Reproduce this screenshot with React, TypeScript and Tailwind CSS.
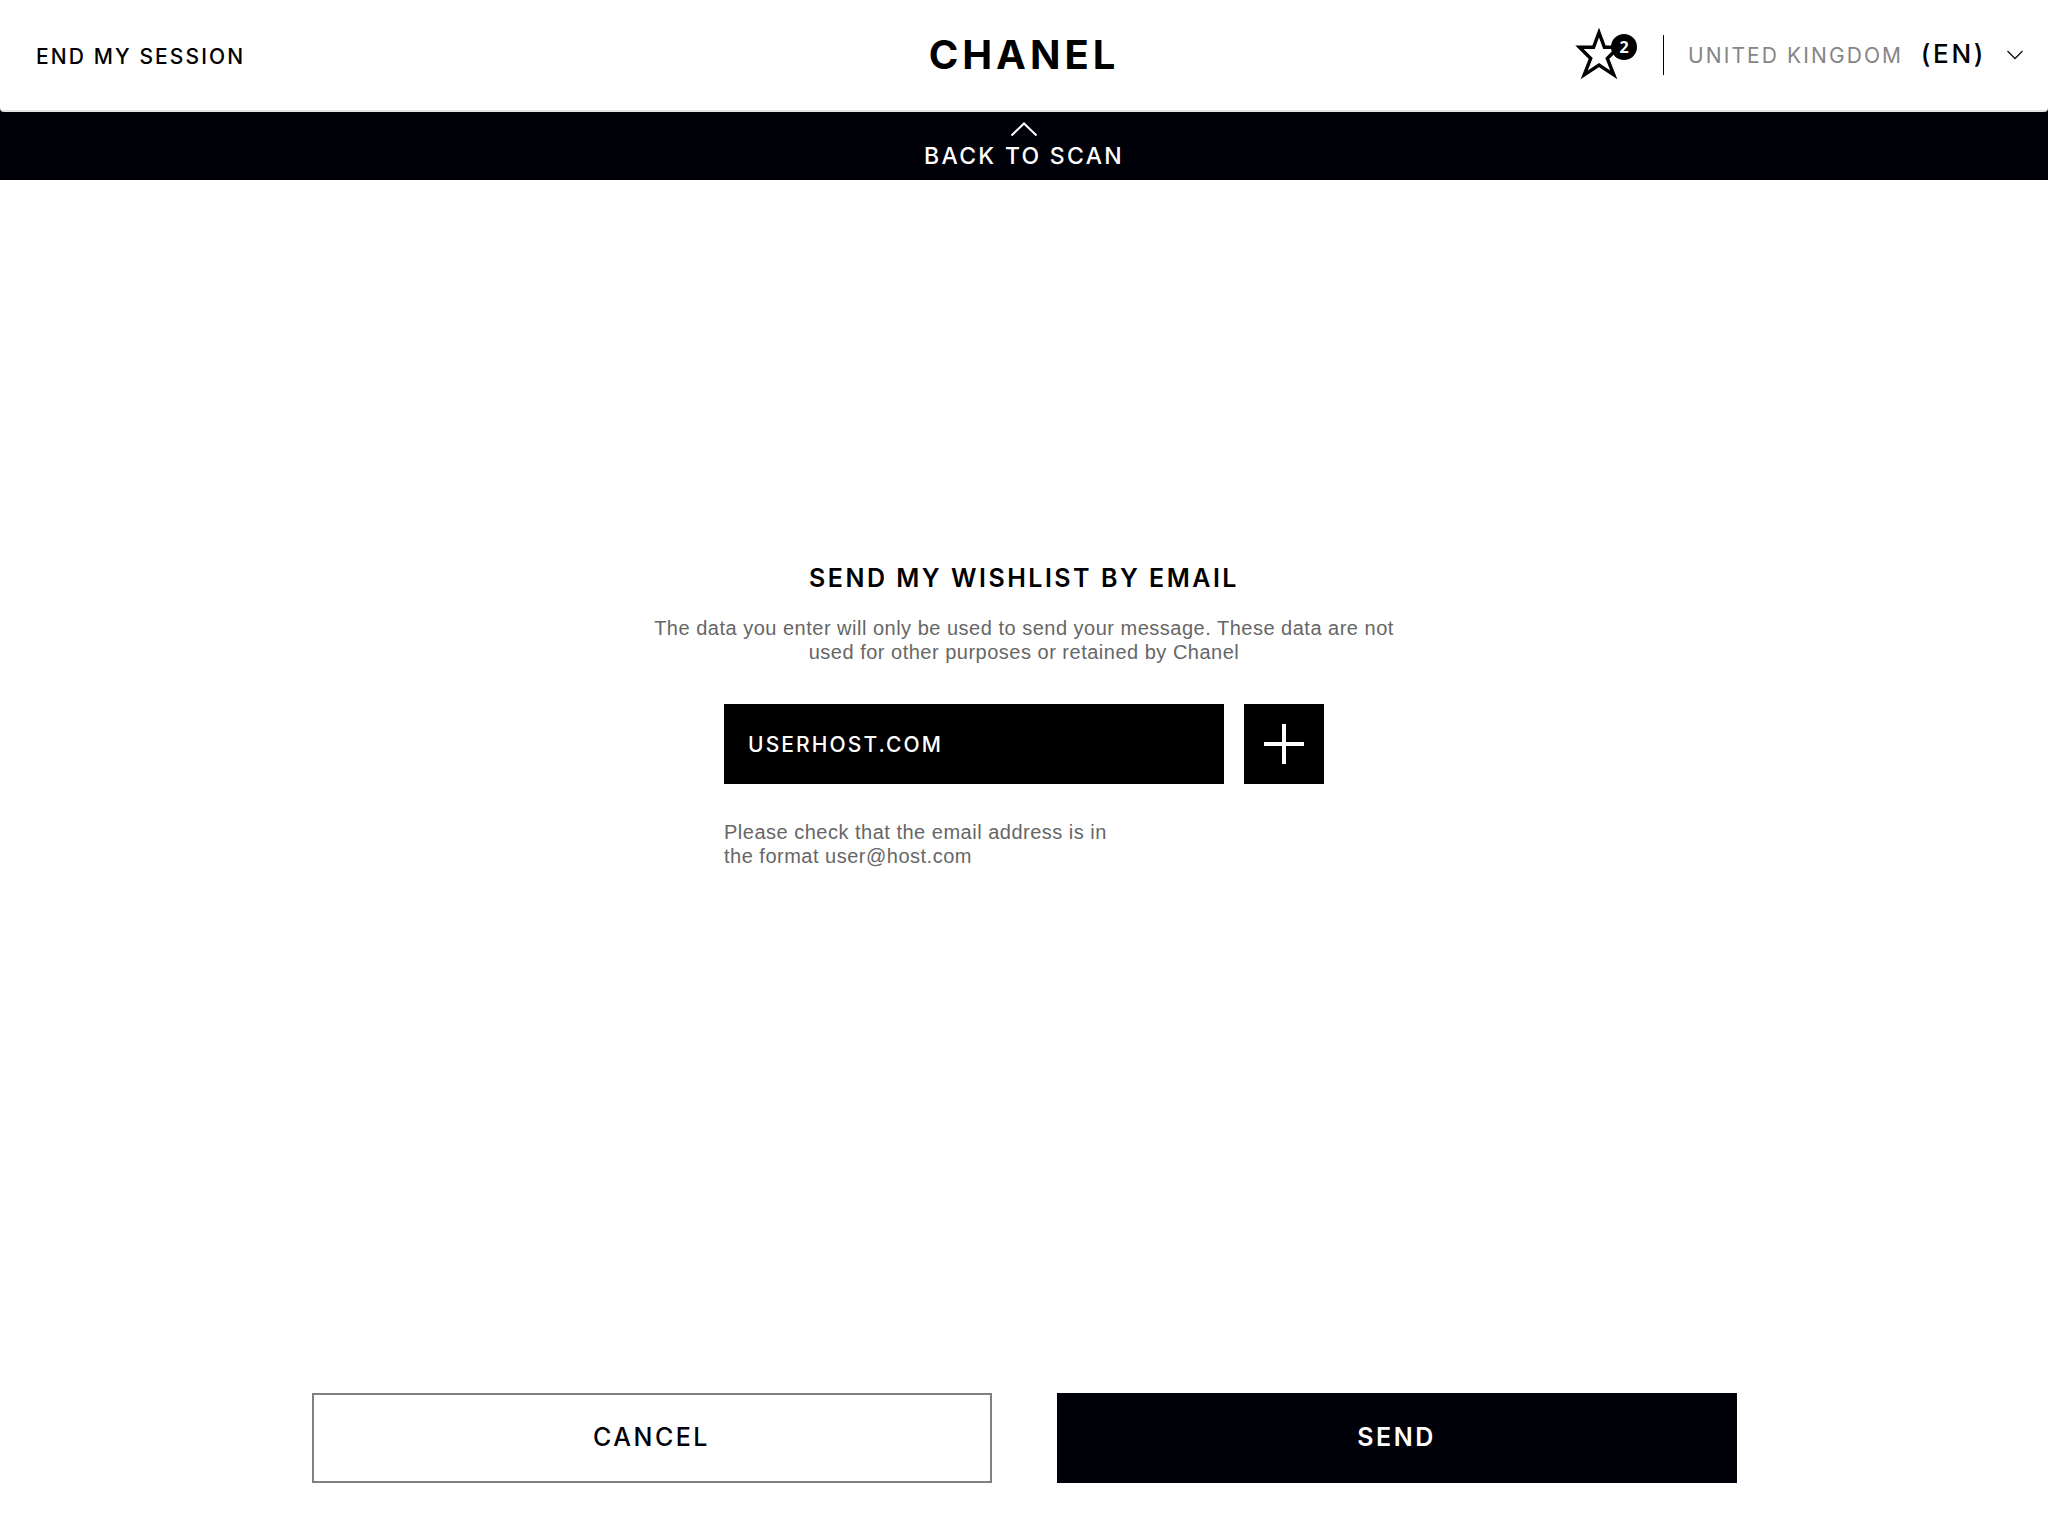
import React, { useState } from "react";

function StarIcon() {
  return (
    <svg width="50" height="54" viewBox="0 0 50 54" fill="none" stroke="#000" strokeWidth="3.4" strokeMiterlimit="10" aria-hidden="true">
      <path d="M25 4.500 L30.400 19.200 H44.600 L33.300 30.500 L39.800 46.800 L25 37 L10.200 46.800 L16.700 30.500 L5.400 19.200 H19.600 Z" />
    </svg>
  );
}

function Header() {
  const [country, setCountry] = useState("uk");
  return (
    <header className="grid h-28 grid-cols-[1fr_auto_1fr] items-center rounded-b-sm border-b-2 border-[#e3e3e3] bg-white px-6">
      <button type="button" className="ml-3 justify-self-start pt-1 text-[21px] leading-8 font-medium tracking-widest text-black">
        END MY SESSION
      </button>
      <a href="#home" className="text-[40px] leading-none font-bold tracking-widest text-black">
        CHANEL
      </a>
      <div className="flex items-center justify-self-end">
        <button type="button" aria-label="Wishlist, 2 items" className="relative">
          <StarIcon />
          <span className="absolute top-1.5 left-[37px] flex size-[26px] items-center justify-center rounded-full bg-black font-['Open_Sans',sans-serif] text-base font-bold text-white">
            2
          </span>
        </button>
        <span className="ml-[39px] h-10 w-px bg-black" />
        <label className="relative ml-6 flex items-center">
          <span className="flex w-[298px] items-baseline justify-between">
            <span className="text-[21px] tracking-widest text-[#858585]">UNITED KINGDOM</span>
            <span className="text-[26px] leading-8 font-medium tracking-widest text-black">(EN)</span>
          </span>
          <svg className="ml-5" width="18" height="12" viewBox="0 0 18 12" fill="none" stroke="#111" strokeWidth="1.3" aria-hidden="true">
            <path d="M1.500 2 L9 9.500 L16.500 2" />
          </svg>
          <select
            aria-label="Country and language"
            value={country}
            onChange={(e) => setCountry(e.target.value)}
            className="absolute inset-0 w-full cursor-pointer opacity-0"
          >
            <option value="uk">United Kingdom (EN)</option>
          </select>
        </label>
      </div>
    </header>
  );
}

export default function App() {
  const [email, setEmail] = useState("USERHOST.COM");
  return (
    <div className="flex min-h-screen flex-col bg-white font-['Inter',sans-serif]">
      <div className="bg-[#000008]">
        <Header />
        <button type="button" className="flex h-[68px] w-full flex-col items-center bg-[#000008] pt-2 text-white">
          <svg width="28" height="18" viewBox="0 0 28 18" fill="none" stroke="#fff" strokeWidth="2" aria-hidden="true">
            <path d="M1.500 15.500 L14 3.500 L26.500 15.500" />
          </svg>
          <span className="mt-0.5 text-[23px] leading-8 font-medium tracking-widest">BACK TO SCAN</span>
        </button>
      </div>

      <main className="flex flex-1 flex-col items-center px-6 pt-[382px]">
        <h1 className="text-[25px] leading-8 font-semibold tracking-widest text-black">SEND MY WISHLIST BY EMAIL</h1>
        <p className="mt-[22px] max-w-[750px] text-center font-['Liberation_Sans',sans-serif] text-xl leading-6 tracking-wide text-[#666]">
          The data you enter will only be used to send your message. These data are not used for other purposes or
          retained by Chanel
        </p>
        <form className="mt-10 w-full max-w-[600px]" onSubmit={(e) => e.preventDefault()}>
          <div className="flex gap-5">
            <input
              type="text"
              aria-label="Email address"
              aria-describedby="email-help"
              value={email}
              onChange={(e) => setEmail(e.target.value)}
              className="h-20 min-w-0 flex-1 bg-black px-6 text-[21px] font-medium tracking-widest text-white outline-none"
            />
            <button type="button" aria-label="Add email" className="flex size-20 items-center justify-center bg-black">
              <svg width="40" height="40" viewBox="0 0 40 40" stroke="#fff" strokeWidth="4" aria-hidden="true">
                <path d="M20 0 V40 M0 20 H40" />
              </svg>
            </button>
          </div>
          <p id="email-help" className="mt-9 max-w-[400px] font-['Liberation_Sans',sans-serif] text-xl leading-6 tracking-wide text-[#666]">
            Please check that the email address is in the format user@host.com
          </p>
        </form>
      </main>

      <footer className="flex w-full justify-center gap-[65px] px-6 pb-[53px]">
        <button type="button" className="h-[90px] w-full max-w-[680px] border-2 border-[#808080] bg-white text-[25px] font-medium tracking-widest text-[#000008]">
          CANCEL
        </button>
        <button type="submit" className="h-[90px] w-full max-w-[680px] bg-[#000008] text-[25px] font-semibold tracking-widest text-white">
          SEND
        </button>
      </footer>
    </div>
  );
}
